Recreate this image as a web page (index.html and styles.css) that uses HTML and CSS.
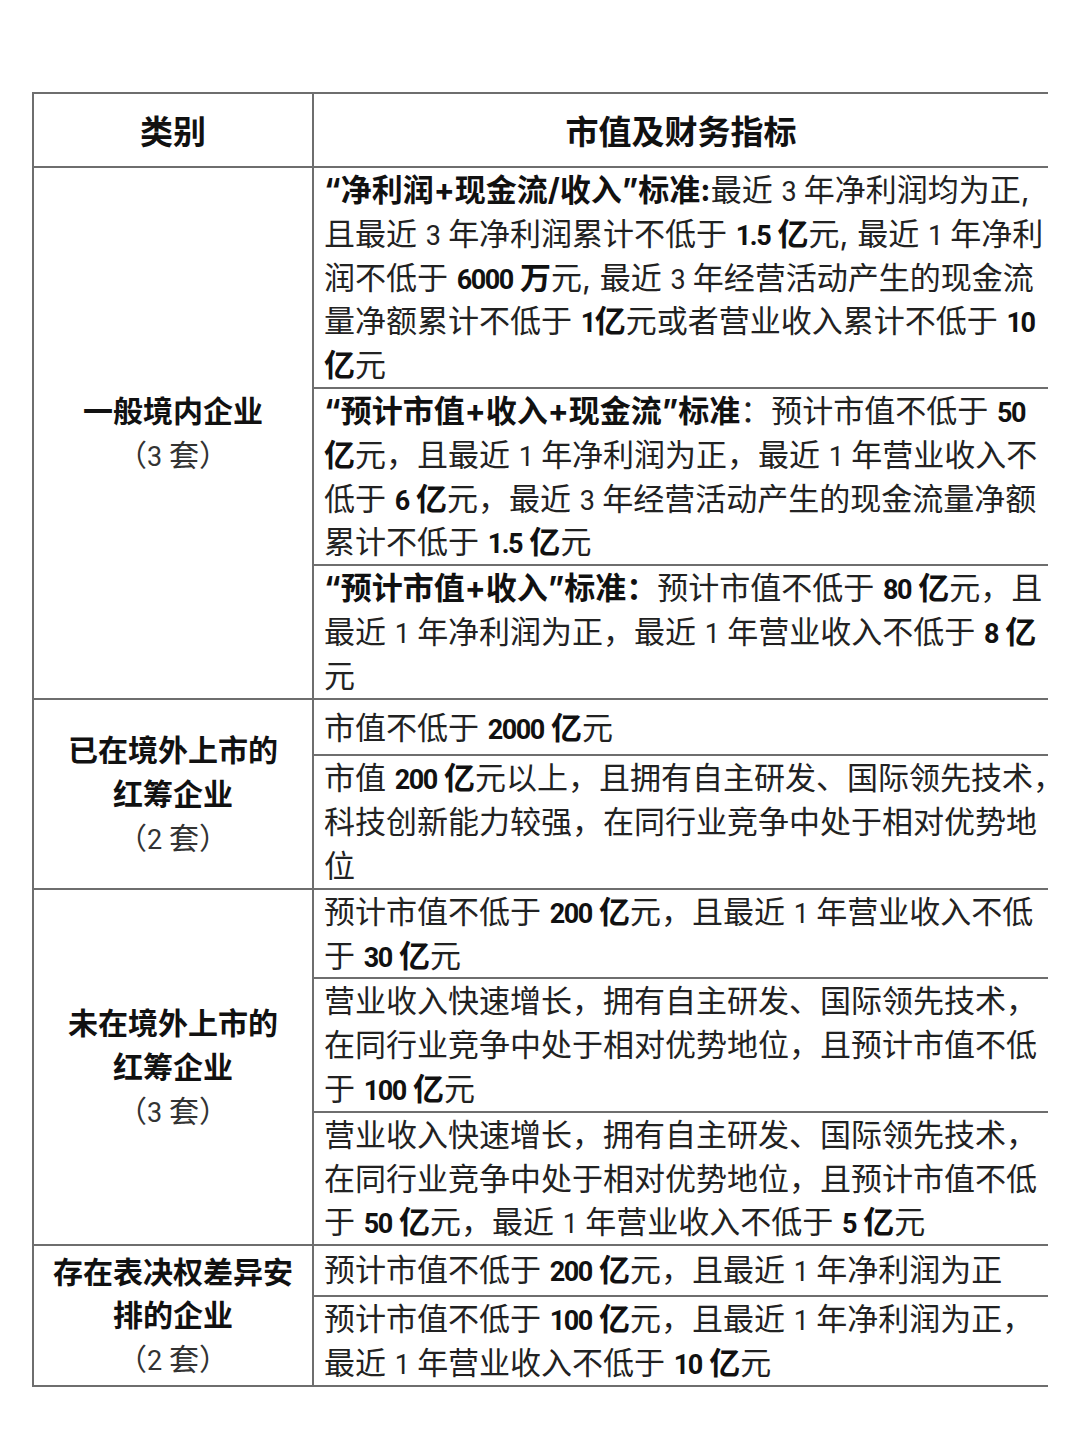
FILE: index.html
```html
<!DOCTYPE html>
<html lang="zh-CN">
<head>
<meta charset="utf-8">
<title>上市标准</title>
<link rel="stylesheet" href="styles.css">
</head>
<body>
<table class="std">
  <thead>
    <tr>
      <th class="cat">类别</th>
      <th class="ind">市值及财务指标</th>
    </tr>
  </thead>
  <tbody>
    <tr>
      <td class="cat" rowspan="3"><b>一般境内企业</b><br><span class="sets">（<span class="num">3</span> 套）</span></td>
      <td class="ind"><b>“净利润+现金流/收入”标准:</b>最近 <span class="num">3</span> 年净利润均为正,<br>且最近 <span class="num">3</span> 年净利润累计不低于 <b><span class="num">1.5</span> 亿</b>元, 最近 <span class="num">1</span> 年净利<br>润不低于 <b><span class="num">6000</span> 万</b>元, 最近 <span class="num">3</span> 年经营活动产生的现金流<br>量净额累计不低于 <b><span class="num">1</span>亿</b>元或者营业收入累计不低于 <b><span class="num">10</span></b><br><b>亿</b>元</td>
    </tr>
    <tr>
      <td class="ind"><b>“预计市值+收入+现金流”标准</b>：预计市值不低于 <b><span class="num">50</span></b><br><b>亿</b>元，且最近 <span class="num">1</span> 年净利润为正，最近 <span class="num">1</span> 年营业收入不<br>低于 <b><span class="num">6</span> 亿</b>元，最近 <span class="num">3</span> 年经营活动产生的现金流量净额<br>累计不低于 <b><span class="num">1.5</span> 亿</b>元</td>
    </tr>
    <tr>
      <td class="ind"><b>“预计市值+收入”标准：</b>预计市值不低于 <b><span class="num">80</span> 亿</b>元，且<br>最近 <span class="num">1</span> 年净利润为正，最近 <span class="num">1</span> 年营业收入不低于 <b><span class="num">8</span> 亿</b><br>元</td>
    </tr>

    <tr>
      <td class="cat" rowspan="2"><b>已在境外上市的<br>红筹企业</b><br><span class="sets">（<span class="num">2</span> 套）</span></td>
      <td class="ind tall">市值不低于 <b><span class="num">2000</span> 亿</b>元</td>
    </tr>
    <tr>
      <td class="ind">市值 <b><span class="num">200</span> 亿</b>元以上，且拥有自主研发、国际领先技术，<br>科技创新能力较强，在同行业竞争中处于相对优势地<br>位</td>
    </tr>

    <tr>
      <td class="cat" rowspan="3"><b>未在境外上市的<br>红筹企业</b><br><span class="sets">（<span class="num">3</span> 套）</span></td>
      <td class="ind">预计市值不低于 <b><span class="num">200</span> 亿</b>元，且最近 <span class="num">1</span> 年营业收入不低<br>于 <b><span class="num">30</span> 亿</b>元</td>
    </tr>
    <tr>
      <td class="ind">营业收入快速增长，拥有自主研发、国际领先技术，<br>在同行业竞争中处于相对优势地位，且预计市值不低<br>于 <b><span class="num">100</span> 亿</b>元</td>
    </tr>
    <tr>
      <td class="ind">营业收入快速增长，拥有自主研发、国际领先技术，<br>在同行业竞争中处于相对优势地位，且预计市值不低<br>于 <b><span class="num">50</span> 亿</b>元，最近 <span class="num">1</span> 年营业收入不低于 <b><span class="num">5</span> 亿</b>元</td>
    </tr>

    <tr>
      <td class="cat" rowspan="2"><b>存在表决权差异安<br>排的企业</b><br><span class="sets">（<span class="num">2</span> 套）</span></td>
      <td class="ind short">预计市值不低于 <b><span class="num">200</span> 亿</b>元，且最近 <span class="num">1</span> 年净利润为正</td>
    </tr>
    <tr>
      <td class="ind">预计市值不低于 <b><span class="num">100</span> 亿</b>元，且最近 <span class="num">1</span> 年净利润为正，<br>最近 <span class="num">1</span> 年营业收入不低于 <b><span class="num">10</span> 亿</b>元</td>
    </tr>
  </tbody>
</table>
</body>
</html>
```

FILE: styles.css
```css
html, body {
  margin: 0;
  padding: 0;
  background: #ffffff;
}

body {
  padding: 92px 32px 0 32px;
  font-family: "Inter", "Noto Sans CJK SC", sans-serif;
  color: #222222;
}

.std {
  width: 1016px;
  border-collapse: collapse;
  table-layout: fixed;
}

.std th,
.std td {
  border-top: 2px solid #6e6e6e;
  border-bottom: 2px solid #6e6e6e;
  padding: 0;
}

.std .cat {
  width: 278px;
  border-left: 2px solid #6e6e6e;
  border-right: 2px solid #6e6e6e;
  text-align: center;
  vertical-align: middle;
}

.std th {
  height: 72px;
  font-size: 33px;
  font-weight: 700;
  color: #111111;
  text-align: center;
  vertical-align: middle;
}

.std td {
  font-size: 31px;
  line-height: 43.8px;
}

.std td.ind {
  text-align: left;
  vertical-align: top;
  padding: 0 2px 0 10px;
  white-space: nowrap;
}

.std td.tall {
  padding-top: 6px;
  padding-bottom: 5px;
}

.std td.short {
  padding-top: 2px;
  padding-bottom: 3px;
}

.std b {
  font-weight: 700;
  color: #111111;
  line-height: 1;
}

.num {
  font-family: "Roboto", "Inter", sans-serif;
  font-size: 27px;
  letter-spacing: -1.5px;
  line-height: 1;
}

.std td.cat b {
  font-size: 30px;
}

.sets {
  font-size: 30px;
  color: #333333;
  line-height: 1;
}
```
